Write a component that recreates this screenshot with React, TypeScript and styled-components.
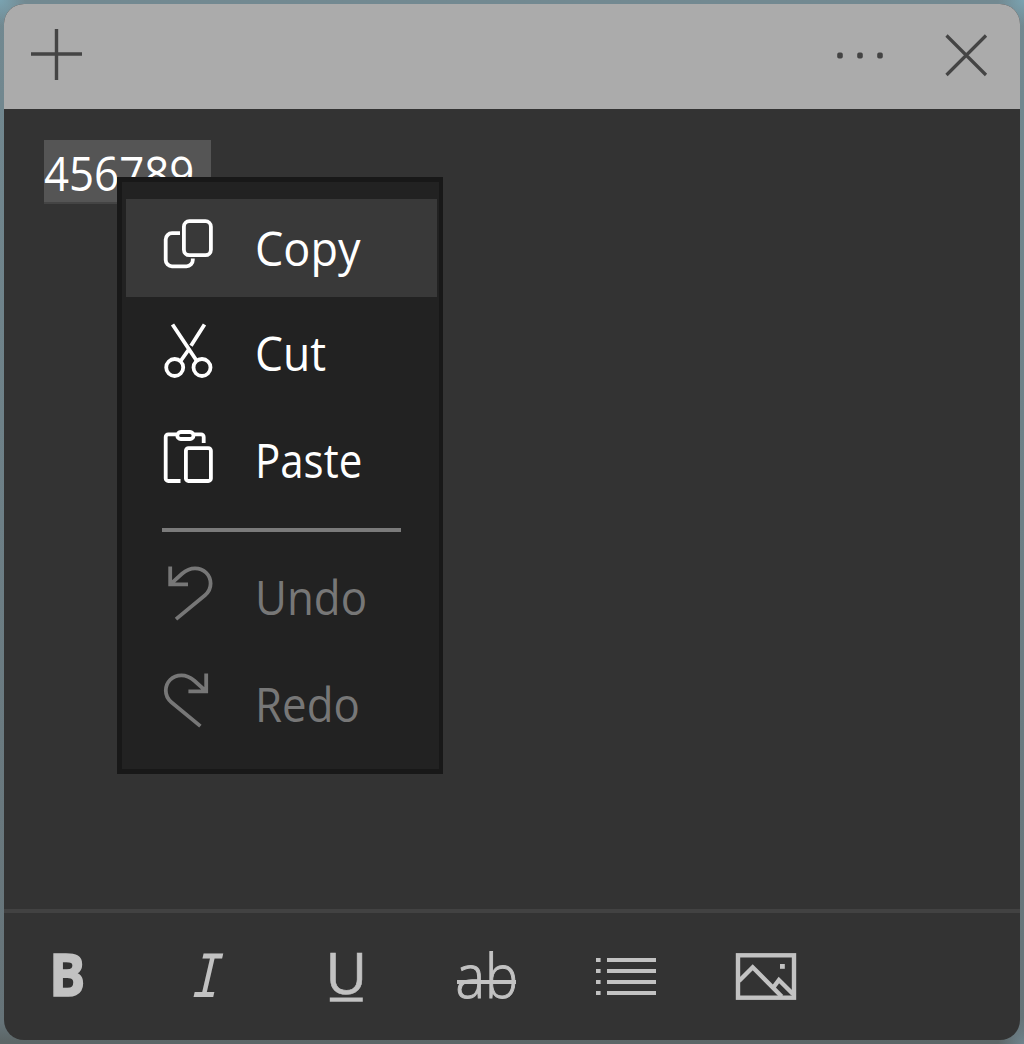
import React from "react";
import styled, { createGlobalStyle } from "styled-components";

const GlobalStyle = createGlobalStyle`
  html, body { margin: 0; padding: 0; background: #6e8087; }
  *, *::before, *::after { box-sizing: border-box; }
`;

const Desktop = styled.div`
  width: 1024px;
  height: 1044px;
  padding: 4px;
  overflow: hidden;
  background:
    radial-gradient(circle at 0 0, #7aa3b1 0, rgba(122, 163, 177, 0) 26px),
    radial-gradient(circle at 100% 0, #7aa3b1 0, rgba(122, 163, 177, 0) 26px),
    radial-gradient(circle at 100% 100%, #70858f 0, rgba(112, 133, 143, 0) 26px),
    linear-gradient(180deg, #728991 0%, #6d7f86 50%, #667378 98%, #5c6667 99.7%);
  font-family: "Open Sans", "Noto Sans", sans-serif;
`;

const Note = styled.main`
  display: flex;
  flex-direction: column;
  width: 100%;
  height: 100%;
  border-radius: 20px;
  overflow: hidden;
  background: #333333;
`;

const TitleBar = styled.header`
  display: flex;
  align-items: flex-start;
  gap: 46px;
  height: 105px;
  padding: 21px 29px 0 23px;
  background: #ababab;
  color: #444444;
`;

const Spacer = styled.div`
  flex: 1;
`;

const PlainButton = styled.button<{ $w: number; $h: number }>`
  display: block;
  width: ${(p) => p.$w}px;
  height: ${(p) => p.$h}px;
  padding: 0;
  border: 0;
  background: none;
  color: inherit;
`;

const Glyph = styled.svg`
  display: block;
  flex: none;
  overflow: visible;
  fill: none;
  stroke: currentColor;
`;

const Content = styled.section`
  position: relative;
  flex: 1;
  padding: 31px 40px;
`;

const Selection = styled.div`
  display: flex;
  width: 167px;
  height: 64px;
  background: #555555;
  border-bottom: 2px solid #444444;
  color: #ffffff;
  font-size: 47px;
  line-height: 67px;
  white-space: pre;
`;

const Narrow = styled.span<{ $scale: number }>`
  display: inline-block;
  transform: scaleX(${(p) => p.$scale});
  transform-origin: 0 50%;
`;

const Menu = styled.div`
  position: absolute;
  left: 113px;
  top: 68px;
  display: flex;
  flex-direction: column;
  gap: 8.5px;
  width: 326px;
  height: 597px;
  padding: 17px 1px 0 4px;
  border: 5px solid #181818;
  border-right-width: 4px;
  background: #222222;
`;

const MenuItem = styled.div<{ $active?: boolean; $disabled?: boolean }>`
  display: flex;
  align-items: center;
  gap: 41px;
  width: 311px;
  height: 98px;
  padding-left: 36px;
  background: ${(p) => (p.$active ? "#393939" : "transparent")};
  color: ${(p) => (p.$disabled ? "#777777" : "#ffffff")};
  font-size: 47px;
  line-height: 64px;
`;

const Label = styled(Narrow)<{ $lift: number }>`
  padding-bottom: ${(p) => p.$lift}px;
`;

const Separator = styled.div`
  width: 239px;
  height: 4px;
  margin: 9px 0 8px 36px;
  background: #7b7b7b;
`;

const Toolbar = styled.footer`
  display: flex;
  gap: 79.6px;
  height: 131px;
  padding: 32px 0 0 34px;
  border-top: 4px solid #424242;
  color: #c2c2c2;
`;

const GlyphText = styled.text<{
  $size: number;
  $weight: number;
  $family?: string;
  $italic?: boolean;
  $outline?: number;
}>`
  font-family: ${(p) => p.$family ?? '"Open Sans", sans-serif'};
  font-size: ${(p) => p.$size}px;
  font-weight: ${(p) => p.$weight};
  font-style: ${(p) => (p.$italic ? "italic" : "normal")};
  fill: currentColor;
  stroke-width: ${(p) => p.$outline ?? 0}px;
`;

const MenuGlyph = ({ children }: { children: React.ReactNode }) => (
  <Glyph width="52" height="64" viewBox="0 0 52 64" strokeWidth="3.8">
    {children}
  </Glyph>
);

const CopyIcon = () => (
  <MenuGlyph>
    <rect x="21.9" y="5.2" width="27" height="34" rx="5.5" />
    <path d="M18 17.2h-8a6.3 6.3 0 0 0-6.3 6.3V44a6.3 6.3 0 0 0 6.3 6.3h14.5a6.3 6.3 0 0 0 6.3-6.3v-1.5" />
  </MenuGlyph>
);

const CutIcon = () => (
  <MenuGlyph>
    <circle cx="12.7" cy="44.5" r="8.5" />
    <circle cx="40" cy="44.5" r="8.5" />
    <path d="M10.5 1.5 34.5 37.5M42.5 1.5 29 22.8M26.4 27 19 37.5" />
  </MenuGlyph>
);

const PasteIcon = () => (
  <MenuGlyph>
    <rect x="15.3" y="3" width="16.2" height="7" rx="3.4" />
    <path d="M14.5 5.4H6.3a2.6 2.6 0 0 0-2.6 2.6v41.4A2.6 2.6 0 0 0 6.3 52H18.5M32 5.4h7.1a2.6 2.6 0 0 1 2.6 2.6V14" />
    <rect x="23.9" y="19.2" width="25" height="32.8" rx="2.6" />
  </MenuGlyph>
);

const turnPath =
  "M8.2 1.6V19.4H26M8.8 18.8 20 8.8C24 5.4 28 3.4 33 3.4 42 3.4 48.6 9.9 48.6 18.6 48.6 23.6 46.7 27.2 43 30.2L14 54.1";

const UndoIcon = () => (
  <MenuGlyph>
    <path d={turnPath} />
  </MenuGlyph>
);

const RedoIcon = () => (
  <MenuGlyph>
    <path d={turnPath} transform="translate(52.4 0) scale(-1 1)" />
  </MenuGlyph>
);

type Item = {
  label: string;
  Icon: React.FC;
  scale: number;
  lift: number;
  active?: boolean;
  disabled?: boolean;
};

const editItems: Item[] = [
  { label: "Copy", Icon: CopyIcon, scale: 0.957, lift: 1, active: true },
  { label: "Cut", Icon: CutIcon, scale: 0.945, lift: 3 },
  { label: "Paste", Icon: PasteIcon, scale: 0.894, lift: 2 },
];

const historyItems: Item[] = [
  { label: "Undo", Icon: UndoIcon, scale: 0.933, lift: 0, disabled: true },
  { label: "Redo", Icon: RedoIcon, scale: 0.932, lift: 0, disabled: true },
];

const renderItem = ({ label, Icon, scale, lift, active, disabled }: Item) => (
  <MenuItem key={label} role="menuitem" $active={active} $disabled={disabled}>
    <Icon />
    <Label $scale={scale} $lift={lift}>
      {label}
    </Label>
  </MenuItem>
);

const ToolGlyph = ({ children }: { children: React.ReactNode }) => (
  <PlainButton $w={60} $h={64}>
    <Glyph width="60" height="64" viewBox="0 0 60 64" strokeWidth="4">
      {children}
    </Glyph>
  </PlainButton>
);

const listRows = [13, 24, 35, 46];

export default function App() {
  return (
    <>
      <GlobalStyle />
      <Desktop>
        <Note>
          <TitleBar>
            <PlainButton $w={60} $h={60} aria-label="New note">
              <Glyph width="60" height="60" viewBox="0 0 60 60" strokeWidth="3.4">
                <path d="M29.5 4v51M4 29h51" />
              </Glyph>
            </PlainButton>
            <Spacer />
            <PlainButton $w={60} $h={60} aria-label="Menu">
              <Glyph width="60" height="60" viewBox="0 0 60 60">
                <g fill="currentColor" stroke="none">
                  <rect x="12.2" y="27.6" width="5.6" height="6" rx="1.8" />
                  <rect x="32.2" y="27.6" width="5.6" height="6" rx="1.8" />
                  <rect x="52.2" y="27.6" width="5.6" height="6" rx="1.8" />
                </g>
              </Glyph>
            </PlainButton>
            <PlainButton $w={60} $h={60} aria-label="Close">
              <Glyph width="60" height="60" viewBox="0 0 60 60" strokeWidth="3.2">
                <path d="M15.5 10.5 55 50M55 10.5 15.5 50" />
              </Glyph>
            </PlainButton>
          </TitleBar>
          <Content>
            <Selection>
              <Narrow $scale={0.932}>456789</Narrow>
            </Selection>
            <Menu role="menu">
              {editItems.map(renderItem)}
              <Separator />
              {historyItems.map(renderItem)}
            </Menu>
          </Content>
          <Toolbar>
            <ToolGlyph>
              <GlyphText
                x="11.3"
                y="51"
                $size={59}
                $weight={700}
                $outline={1.6}
                textLength="36"
                lengthAdjust="spacingAndGlyphs"
              >
                B
              </GlyphText>
            </ToolGlyph>
            <ToolGlyph>
              <g transform="translate(16.2 51.5) skewX(-5) scale(0.74 1)">
                <GlyphText x="-4" y="0" $size={66} $weight={400} $italic $family='"Liberation Mono", monospace'>
                  I
                </GlyphText>
              </g>
            </ToolGlyph>
            <ToolGlyph>
              <GlyphText
                x="8.4"
                y="49.2"
                $size={57}
                $weight={400}
                $outline={0.6}
                textLength="41.6"
                lengthAdjust="spacingAndGlyphs"
              >
                U
              </GlyphText>
              <path d="M12.8 54.6h33" strokeWidth="4.4" />
            </ToolGlyph>
            <ToolGlyph>
              <GlyphText
                x="-1.5"
                y="53"
                $size={61}
                $weight={300}
                $outline={1}
                textLength="62.5"
                lengthAdjust="spacingAndGlyphs"
              >
                ab
              </GlyphText>
              <path d="M0 37h59" />
            </ToolGlyph>
            <ToolGlyph>
              {listRows.map((y) => (
                <path key={y} d={`M0 ${y + 2}h4.6M11 ${y + 2}h49`} />
              ))}
            </ToolGlyph>
            <ToolGlyph>
              <rect x="2" y="10.3" width="56" height="42.4" strokeWidth="4.4" />
              <path d="M3 36 16.7 22.3 45.7 51.5M37.3 42.5l5.6-7.5L57 49" strokeWidth="4.4" />
              <rect x="44" y="19" width="4.8" height="4.8" fill="currentColor" stroke="none" />
            </ToolGlyph>
          </Toolbar>
        </Note>
      </Desktop>
    </>
  );
}
